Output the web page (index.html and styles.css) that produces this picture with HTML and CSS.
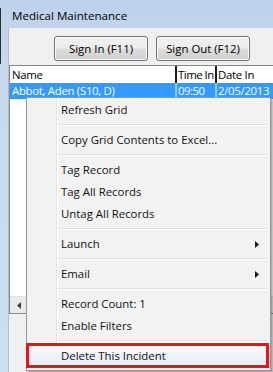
FILE: index.html
```html
<!DOCTYPE html>
<html>
<head>
<meta charset="utf-8">
<link rel="stylesheet" href="styles.css">
</head>
<body>
<div class="win">
  <div class="title">Medical Maintenance</div>
  <div class="frame-row">
    <div class="client">
      <div class="buttons">
        <button class="btn">Sign In (F11)</button>
        <button class="btn">Sign Out (F12)</button>
      </div>
      <div class="grid">
        <div class="row head">
          <div class="c name">Name</div>
          <div class="c time">Time In</div>
          <div class="c date">Date In</div>
        </div>
        <div class="row sel">
          <div class="c name">Abbot, Aden (S10, D)</div>
          <div class="c time">09:50</div>
          <div class="c date">2/05/2013</div>
        </div>
        <div class="grid-body"></div>
        <div class="hscroll">
          <div class="sb-btn"><svg width="4" height="7" viewBox="0 0 4 7"><path d="M4 0 L0 3.5 L4 7 Z" fill="#404040"/></svg></div>
        </div>
      </div>
    </div>
  </div>
  <div class="menu">
    <div class="item">Refresh Grid</div>
    <div class="sep"></div>
    <div class="item">Copy Grid Contents to Excel...</div>
    <div class="sep"></div>
    <div class="item">Tag Record</div>
    <div class="item">Tag All Records</div>
    <div class="item">Untag All Records</div>
    <div class="sep"></div>
    <div class="item sub">Launch<svg class="arrow" width="4" height="7" viewBox="0 0 4 7"><path d="M0 0 L4 3.5 L0 7 Z" fill="#1a1a1a"/></svg></div>
    <div class="sep"></div>
    <div class="item sub">Email<svg class="arrow" width="4" height="7" viewBox="0 0 4 7"><path d="M0 0 L4 3.5 L0 7 Z" fill="#1a1a1a"/></svg></div>
    <div class="sep"></div>
    <div class="item">Record Count: 1</div>
    <div class="item">Enable Filters</div>
    <div class="sep"></div>
    <div class="item hot marked">Delete This Incident</div>
  </div>
</div>
</body>
</html>
```
FILE: styles.css
```css
* { box-sizing: border-box; }
html, body {
  margin: 0;
  padding: 0;
  width: 273px;
  height: 372px;
  overflow: hidden;
}
body {
  font-family: "Open Sans", "Noto Sans", sans-serif;
  font-size: 11.4px;
  color: #000;
}
.win {
  position: relative;
  width: 273px;
  height: 372px;
  display: flex;
  flex-direction: column;
  background:
    linear-gradient(to right, #2e2e2e 1px, transparent 1px) 0 8px / 1px 56px no-repeat,
    linear-gradient(to bottom, #bcd1ea 0px, #c6d8ee 60px, #cddff2 372px);
}
.title {
  height: 28px;
  padding-left: 12px;
  padding-top: 5px;
  line-height: 22px;
  font-size: 11.6px;
  white-space: nowrap;
}
.frame-row {
  flex: 1;
  display: flex;
  padding-left: 8px;
}
.client {
  flex: 1;
  background: #f0f0f0;
  border-left: 1px solid #aebdd0;
  display: flex;
  flex-direction: column;
}
.buttons {
  display: flex;
  gap: 8px;
  padding-top: 8px;
  padding-left: 45px;
}
.btn {
  width: 94px;
  height: 25px;
  padding: 0;
  font-family: inherit;
  font-size: 11.4px;
  color: #000;
  border: 1px solid #707070;
  border-radius: 3px;
  background: linear-gradient(to bottom, #f2f2f2 0%, #ebebeb 48%, #dddddd 52%, #cfcfcf 100%);
  box-shadow: inset 0 0 0 1px #fbfbfb;
}
.grid {
  margin-top: 4px;
  width: 270px;
  border-top: 1px solid #828790;
  border-left: 1px solid #828790;
  border-bottom: 1px solid #828790;
  background: #fff;
  display: flex;
  flex-direction: column;
}
.row {
  display: flex;
  white-space: nowrap;
  letter-spacing: -0.3px;
}
.row.head {
  height: 17px;
  line-height: 17px;
  background: #fff;
}
.c { overflow: hidden; }
.c.name { width: 167px; padding-left: 2px; border-right: 2px solid #1c1c1c; }
.c.time { width: 40px; padding-left: 1px; border-right: 2px solid #1c1c1c; letter-spacing: -0.5px; }
.c.date { flex: 1; padding-left: 1px; }
.row.sel {
  height: 16px;
  line-height: 15px;
  background: #3399ff;
  color: #fff;
}
.row.sel .c.name, .row.sel .c.time { border-right-color: #9cc9f7; }
.grid-body {
  height: 197px;
  background: #fff;
}
.hscroll {
  height: 17px;
  background: #eaeaea;
  border-top: 1px solid #e0e0e0;
  display: flex;
}
.sb-btn {
  width: 17px;
  display: flex;
  align-items: center;
  justify-content: center;
}
.menu {
  position: absolute;
  left: 26px;
  top: 97px;
  width: 245px;
  height: 274px;
  padding: 1px 1px 0 1px;
  border: 1px solid #979797;
  background:
    linear-gradient(to right, transparent 29px, #e2e3e3 29px, #e2e3e3 30px, #ffffff 30px, #ffffff 31px, transparent 31px),
    #f2f2f2;
  box-shadow: 2px 2px 2px rgba(0,0,0,0.35);
  color: #111;
  white-space: nowrap;
}
.item {
  position: relative;
  height: 22px;
  line-height: 22px;
  padding-left: 33px;
  display: flex;
  align-items: center;
}
.item .arrow {
  position: absolute;
  right: 10px;
  top: 8px;
}
.sep {
  height: 8px;
  margin-left: 30px;
  margin-right: 2px;
  display: flex;
  flex-direction: column;
  justify-content: center;
}
.sep::before {
  content: "";
  display: block;
  height: 1px;
  background: #e0e0e0;
  border-bottom: 1px solid #ffffff;
  box-sizing: content-box;
}
.item.hot {
  background: linear-gradient(to bottom, #fbfcfe 0%, #eef3f9 50%, #e2eaf4 100%);
}
.item.marked::after {
  content: "";
  position: absolute;
  left: -2px;
  top: -2px;
  right: 0;
  bottom: -1px;
  border: 3px solid #e8141b;
}
```
